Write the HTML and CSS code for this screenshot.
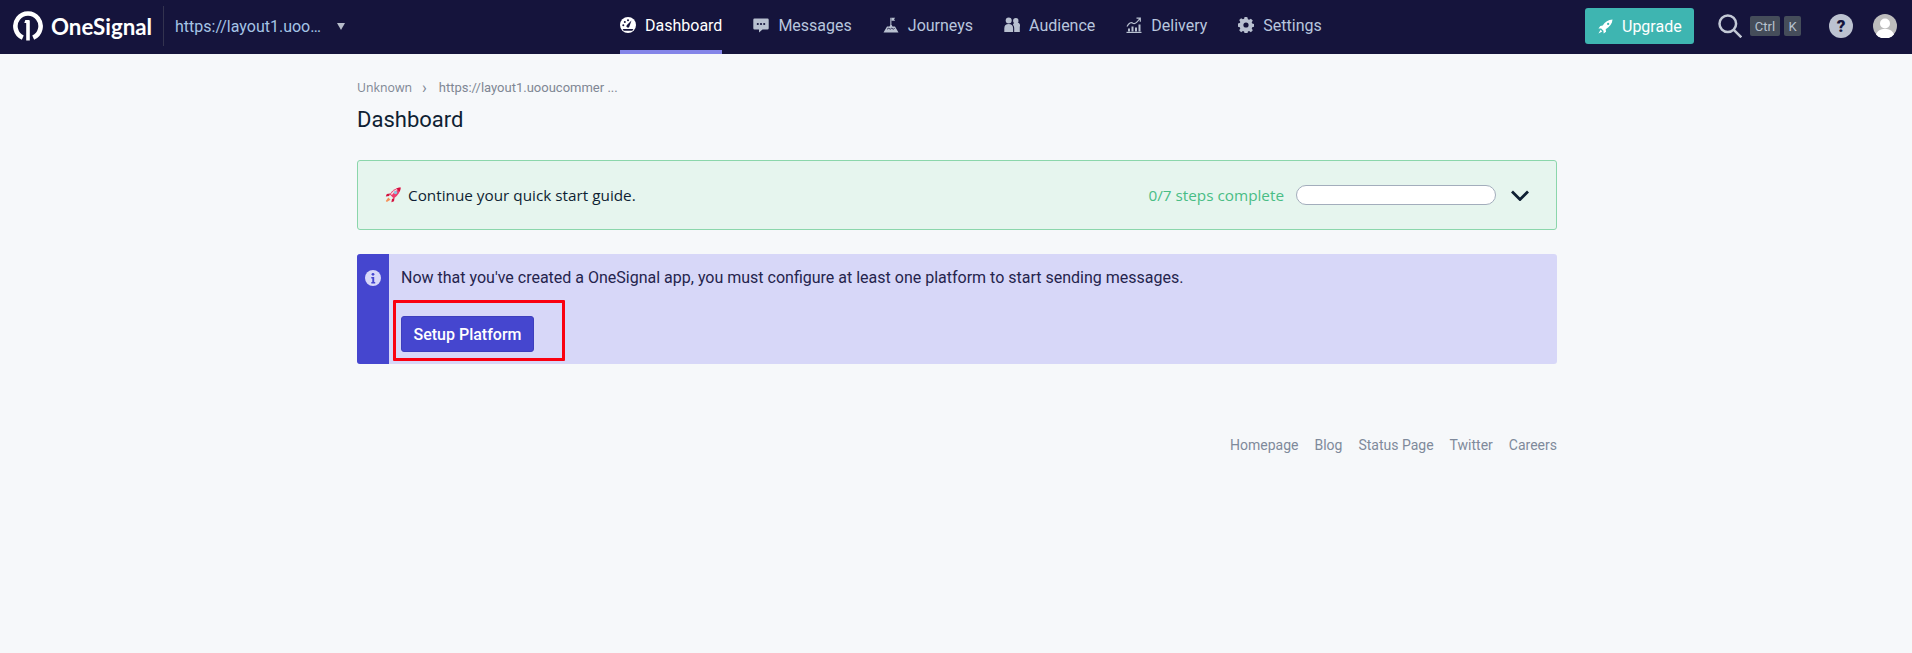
FILE: index.html
```html
<!DOCTYPE html>
<html lang="en">
<head>
<meta charset="utf-8">
<title>OneSignal Dashboard</title>
<link rel="stylesheet" href="styles.css">
</head>
<body>
<header class="topbar">
  <div class="brand">
    <svg class="logo" viewBox="0 0 30 30" width="30" height="30"><path d="M9.800 26.600a12.600 12.600 0 1 1 10.400 0" fill="none" stroke="#fff" stroke-width="4.600"/><path d="M12.300 9h3.500a1 1 0 0 1 1 1v19.500h-3.600V12h-1.900z" fill="#fff"/></svg>
    <span class="wordmark">OneSignal</span>
  </div>
  <div class="app-select">
    <span class="app-name">https://layout1.uoo…</span>
    <span class="caret"></span>
  </div>
  <nav class="nav">
    <a class="nav-item active">
      <svg viewBox="0 0 16 16" width="16" height="16"><circle cx="8" cy="8" r="8" fill="#fff"/><path d="M6.700 8.200 11.500 3.500 9.200 10a1.400 1.400 0 0 1-2.500-1.800z" fill="#15143c"/><path d="M2.600 12h10.800l-1.100 1.800H3.700z" fill="#15143c"/><circle cx="3.300" cy="8.200" r="1" fill="#15143c"/><circle cx="4.800" cy="4.900" r="1" fill="#15143c"/><circle cx="8" cy="3.300" r="1" fill="#15143c"/></svg>
      Dashboard</a>
    <a class="nav-item">
      <svg viewBox="0 0 16 16" width="16" height="16"><path d="M1.500 1.500h13a1.200 1.200 0 0 1 1.200 1.200v8.600a1.200 1.200 0 0 1-1.200 1.200H9.500L6 15.500v-3H1.500a1.200 1.200 0 0 1-1.200-1.200V2.700a1.200 1.200 0 0 1 1.200-1.200z" fill="#b8c0d0"/><circle cx="4.800" cy="7" r="1.100" fill="#15143c"/><circle cx="8" cy="7" r="1.100" fill="#15143c"/><circle cx="11.200" cy="7" r="1.100" fill="#15143c"/></svg>
      Messages</a>
    <a class="nav-item">
      <svg viewBox="0 0 16 16" width="16" height="16"><path d="M.5 15.500 4 9.500h2.500l.8-1.500h1.400l.8 1.500H12l3.500 6z" fill="#b8c0d0"/><path d="M7.300 8V.8h1.100V8z" fill="#b8c0d0"/><path d="M8.400 .8h3.800L11 2.300l1.200 1.500H8.400z" fill="#b8c0d0"/><path d="M4 12.200l1.800-1 1.400 1 1.600-1 1.400 1 1.500-.8" fill="none" stroke="#15143c" stroke-width=".8"/></svg>
      Journeys</a>
    <a class="nav-item">
      <svg viewBox="0 0 16 16" width="16" height="16"><circle cx="4.700" cy="3.500" r="3" fill="#b8c0d0"/><circle cx="11.800" cy="3.700" r="2.700" fill="#b8c0d0"/><path d="M.3 15v-3.800A4.400 4.400 0 0 1 4.700 7a4.400 4.400 0 0 1 4.400 4.200V15z" fill="#b8c0d0"/><path d="M10.200 15v-3.800c0-1.500-.5-2.700-1.300-3.500A3.600 3.600 0 0 1 15.800 9.800V15z" fill="#b8c0d0"/></svg>
      Audience</a>
    <a class="nav-item">
      <svg viewBox="0 0 16 16" width="16" height="16"><path d="M.5 15.400h15" stroke="#b8c0d0" stroke-width="1.200"/><path d="M3 14.500v-3M6.500 14.500V9.500M10 14.500v-4M13.500 14.500V7.500" stroke="#b8c0d0" stroke-width="2"/><path d="M1 9.500C3 6 5 4.800 7 6.300 9.500 7.500 11.500 5 13.800 1.500M10.500 1.200h3.800v3.600" stroke="#b8c0d0" stroke-width="1.200" fill="none"/></svg>
      Delivery</a>
    <a class="nav-item">
      <svg viewBox="0 0 16 16" width="16" height="16"><path d="M8 0 9.400.3l.5 2 1.200.5 1.800-1.100 1.900 1.900-1.100 1.800.5 1.200 2 .5v2.700l-2 .5-.5 1.200 1.100 1.800-1.900 1.900-1.800-1.100-1.200.5-.5 2H6.600l-.5-2-1.200-.5-1.800 1.100-1.900-1.900 1.100-1.800-.5-1.200-2-.5V6.600l2-.5.5-1.200-1.100-1.800 1.900-1.900 1.800 1.100 1.200-.5.5-2z" fill="#b8c0d0"/><circle cx="8" cy="8" r="2.600" fill="#15143c"/></svg>
      Settings</a>
  </nav>
  <div class="actions">
    <button class="upgrade">
      <svg viewBox="0 0 16 16" width="15" height="15"><path d="M15.500.5C11 .7 7.500 2.800 5 7L2.500 7.400.5 10l2.900.2 2.400 2.400L6 15.500l2.600-2-.4-2.600C12.500 8.500 15.200 5 15.500.5z" fill="#fff"/><circle cx="10.800" cy="5.200" r="1.200" fill="#3eb5b1"/><path d="M2.800 11.500.5 15.500l4-2.300z" fill="#fff"/></svg>
      Upgrade</button>
    <svg class="search" viewBox="0 0 24 24" width="24" height="24"><circle cx="9.800" cy="9.800" r="8.300" fill="none" stroke="#c3c9d6" stroke-width="2.500"/><path d="m15.800 15.800 7.500 7.500" stroke="#c3c9d6" stroke-width="2.500"/></svg>
    <span class="keys"><kbd class="key key-wide">Ctrl</kbd><kbd class="key">K</kbd></span>
    <span class="help">?</span>
    <svg class="avatar" viewBox="0 0 24 24" width="24" height="24"><circle cx="12" cy="12" r="12" fill="#bdbdbd"/><circle cx="12" cy="9.500" r="5" fill="#fff"/><path d="M3 20.500c1.500-4 4.500-5.500 9-5.500s7.500 1.500 9 5.500a12 12 0 0 1-18 0z" fill="#fff"/></svg>
  </div>
</header>

<main class="page">
  <div class="crumbs">
    <span class="crumb-root">Unknown</span>
    <span class="crumb-sep">›</span>
    <span class="crumb-url">https://layout1.uooucommer ...</span>
  </div>
  <h1 class="title">Dashboard</h1>

  <section class="guide">
    <div class="guide-left">
      <svg viewBox="0 0 16 16" width="16" height="16"><path d="M5.200 6.500 1.800 7l-1 2.600 3.300-.6zM9.500 10.800 9 14.200l-2.600 1 .6-3.300z" fill="#d3103f"/><path d="M3.300 10.500 5.500 12.700 1.800 15 .8 14z" fill="#f5915a"/><path d="M15.600.4C11.500.6 8 2.600 4.600 7.200l4.200 4.200C13.400 8 15.400 4.500 15.600.4z" fill="#ee3d6c"/><path d="M12 2C9.500 3 7.500 4.800 5.800 7l1.100 1.100C8.600 5.800 10.500 4 13 2.800z" fill="#f9dbe3"/><path d="M15.600.4c-1.600.1-3 .4-4.300 1l3.300 3.300c.6-1.300.9-2.700 1-4.300z" fill="#d3103f"/><circle cx="10.500" cy="5.500" r="1.700" fill="#8fc3de"/></svg>
      <span>Continue your quick start guide.</span>
    </div>
    <div class="guide-right">
      <span class="steps">0/7 steps complete</span>
      <span class="progress"></span>
      <svg viewBox="0 0 18 11" width="18" height="11"><path d="m1 1.500 8 8 8-8" fill="none" stroke="#0f1f33" stroke-width="2.800"/></svg>
    </div>
  </section>

  <section class="notice">
    <div class="notice-bar">
      <svg viewBox="0 0 16 16" width="16" height="16"><circle cx="8" cy="8" r="8" fill="#d8d8f9"/><circle cx="8" cy="4.300" r="1.400" fill="#4546cf"/><path d="M6.300 7h2.900v5h1v1.400H6.300V12h1V8.400h-1z" fill="#4546cf"/></svg>
    </div>
    <div class="notice-body">
      <p class="notice-text">Now that you've created a OneSignal app, you must configure at least one platform to start sending messages.</p>
      <button class="setup">Setup Platform</button>
      <span class="highlight"></span>
    </div>
  </section>

  <footer class="links">
    <a>Homepage</a><a>Blog</a><a>Status Page</a><a>Twitter</a><a>Careers</a>
  </footer>
</main>
</body>
</html>
```
FILE: styles.css
```css
* { box-sizing: border-box; }
html, body { margin: 0; height: 100%; }
body { background: #f6f8fa; font-family: Roboto, "Liberation Sans", sans-serif; color: #0f1f33; overflow: hidden; }

.topbar { height: 54px; background: #15143c; display: flex; align-items: center; position: relative; }
.brand { display: flex; align-items: center; gap: 8px; width: 164px; padding-left: 13px; border-right: 1px solid #33334f; height: 40px; margin-top: 2px; margin-bottom: 4px; }
.logo { flex: none; }
.wordmark { font-family: Lato, "Open Sans", sans-serif; font-weight: 700; font-size: 22.300px; color: #fff; }
.app-select { display: flex; align-items: center; width: 184px; padding-left: 11px; padding-bottom: 2px; }
.app-name { font-size: 16px; color: #a5c4e6; width: 162px; white-space: nowrap; }
.caret { width: 0; height: 0; border-left: 4.500px solid transparent; border-right: 4.500px solid transparent; border-top: 7px solid #b6bcc9; }

.nav { display: flex; gap: 31px; height: 54px; margin-left: 272px; }
.nav-item { display: flex; align-items: center; gap: 9px; font-size: 16px; color: #b8c6de; height: 54px; border-bottom: 4px solid transparent; }
.nav-item svg { flex: none; margin-top: -1px; }
.nav-item.active { color: #fff; border-bottom-color: #8485e8; }

.actions { margin-left: auto; display: flex; align-items: center; padding-right: 15px; margin-bottom: 2px; }
.upgrade { display: flex; align-items: center; gap: 9px; width: 109px; height: 36px; padding: 0 0 0 13px; background: #3eb5b1; color: #fff; border: 0; border-radius: 3px; font: 16px Roboto, sans-serif; }
.search { margin-left: 24px; }
.keys { display: flex; gap: 4px; margin-left: 8px; }
.key { display: flex; align-items: center; justify-content: center; height: 20px; min-width: 17px; background: #454d5a; color: #b7c2d0; border-radius: 2px; font: 13px Roboto, sans-serif; padding: 0 4px; }
.key-wide { width: 30px; }
.help { display: flex; align-items: center; justify-content: center; width: 24px; height: 24px; margin-left: 28px; border-radius: 50%; background: #bcc2d0; color: #15143c; font-weight: 900; font-size: 17px; }
.avatar { margin-left: 20px; }

.page { width: 1200px; margin-left: 357px; }
.crumbs { display: flex; align-items: center; padding-top: 23px; height: 44px; font-size: 13px; color: #7f8794; white-space: nowrap; }
.crumb-root { font-family: "Open Sans", sans-serif; font-size: 12.300px; }
.crumb-sep { margin: 0 12px 0 10px; font-size: 16px; line-height: 16px; }
.crumb-url { color: #7f8794; }
.title { font-weight: 400; font-size: 22px; line-height: 26px; margin: 9px 0 0; color: #0f1f33; }

.guide { display: flex; align-items: center; justify-content: space-between; height: 70px; margin-top: 27px; padding: 0 27px; background: #e6f5ee; border: 1px solid #8bd6ab; border-radius: 3px; font-family: "Open Sans", sans-serif; font-size: 15.300px; }
.guide-left { display: flex; align-items: center; gap: 7px; color: #0f1f33; }
.guide-right { display: flex; align-items: center; }
.steps { color: #49bd85; margin-right: 12px; }
.progress { width: 200px; height: 20px; background: #fff; border: 1px solid #a3adbc; border-radius: 10px; margin-right: 15px; }

.notice { display: flex; height: 110px; margin-top: 24px; background: #d7d7f8; border-radius: 3px; overflow: hidden; }
.notice-bar { width: 32px; flex: none; background: #4546cf; display: flex; justify-content: center; padding-top: 16px; }
.notice-body { flex: 1; padding: 14px 0 0 12px; position: relative; }
.notice-text { margin: 0; font-size: 16px; line-height: 20px; color: #25244d; }
.setup { display: block; margin-top: 28px; width: 133px; height: 36px; padding: 0; background: #4546cf; color: #fff; border: 1px solid #3d3ebd; border-radius: 3px; font: 500 16px Roboto, sans-serif; }
.highlight { position: absolute; left: 4px; top: 46px; width: 172px; height: 61px; border: 3px solid #fa0010; border-radius: 1px; }

.links { display: flex; justify-content: flex-end; gap: 16px; margin-top: 73px; font-size: 14px; color: #7f8a9b; }
```
